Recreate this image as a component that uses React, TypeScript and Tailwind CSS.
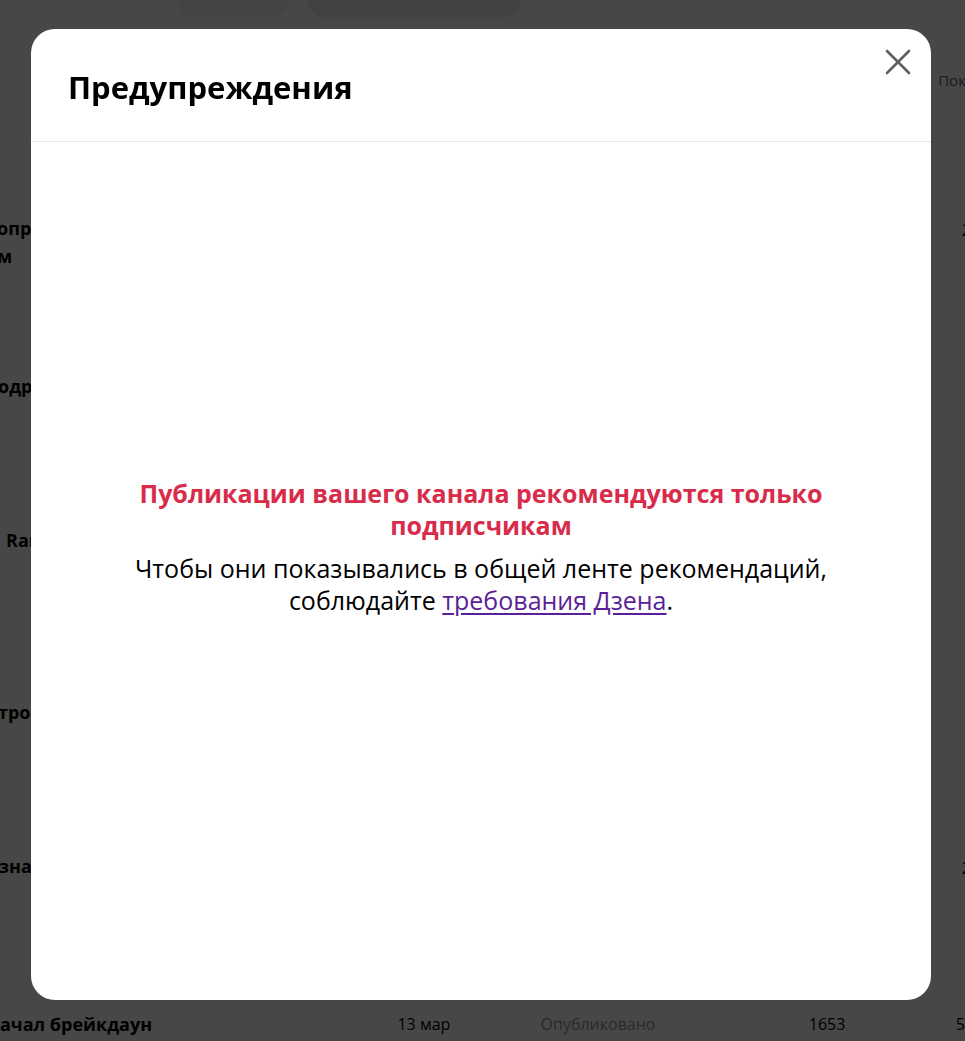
import React from 'react';

const ROWS = [
  { title: ['опросы подписчикам', 'м'], h: 'h-[158px]', right: '2', ml: '-ml-[3px]' },
  { title: ['одробности'], h: 'h-[154px]', right: '', ml: '-ml-[2px]' },
  { title: [' Rammstein'], h: 'h-[172px]', right: '', ml: 'ml-[6px]' },
  { title: ['троили звук'], h: 'h-[154px]', right: '', ml: '-ml-[2px]' },
  { title: ['знаешь'], h: 'h-[159px]', right: '2', ml: '-ml-[1px]' },
];

function Background() {
  return (
    <div className="relative h-[1041px] w-full overflow-hidden bg-white font-['Open_Sans',sans-serif] text-black">
      <div className="flex h-[17px] items-end">
        <div className="ml-[177px] h-[40px] w-[111px] rounded-b-[16px] bg-[#f3f3f3]" />
        <div className="ml-[20px] h-[40px] w-[213px] rounded-b-[16px] bg-[#ececec]" />
      </div>
      <div className="flex justify-end pt-[52px]">
        <span className="-mr-[28px] text-[15px] text-[#666]">Показы</span>
      </div>
      <div className="mt-[122px] flex flex-col">
        {ROWS.map((r, i) => (
          <div key={i} className={`flex ${r.h}`}>
            <div className={`${r.ml} text-[18px] font-bold leading-[28px]`}>
              {r.title.map((t, j) => (
                <div key={j} className="whitespace-nowrap">
                  {t}
                </div>
              ))}
            </div>
            <div className="ml-auto pt-[4px] text-[16px]">{r.right && <span className="mr-[-6px]">{r.right}</span>}</div>
          </div>
        ))}
      </div>
      <div className="flex items-center whitespace-nowrap text-[16px]">
        <span className="w-[400px] text-[18px] font-bold">ачал брейкдаун</span>
        <span className="w-[144px]">13 мар</span>
        <span className="w-[270px] text-[#999]">Опубликовано</span>
        <span className="w-[148px]">1653</span>
        <span>5</span>
      </div>
    </div>
  );
}

export default function App() {
  return (
    <div className="relative h-[1041px] w-full overflow-hidden">
      <Background />
      <div className="fixed inset-0 bg-black/[0.72]">
        <div className="ml-[31px] mt-[29px] flex h-[971px] w-[900px] flex-col rounded-[24px] bg-white font-['Open_Sans',sans-serif]">
          <div className="relative flex h-[113px] shrink-0 items-center border-b border-[#e6e6e6] pl-[37px] pt-[4px]">
            <h2 className="text-[31px] font-bold leading-none text-black">Предупреждения</h2>
            <button className="absolute right-[20px] top-[20px] flex h-[26px] w-[26px] items-center justify-center text-[#5f5f5f]">
              <svg width="26" height="26" viewBox="0 0 26 26" fill="none" stroke="currentColor" strokeWidth="2.6" strokeLinecap="round">
                <path d="M2 2L24 24M24 2L2 24" />
              </svg>
            </button>
          </div>
          <div className="flex flex-1 flex-col items-center justify-center pb-[50px] text-center">
            <p className="max-w-[740px] text-[25px] font-bold leading-[32px] text-[#d82c4a]">
              Публикации вашего канала рекомендуются только подписчикам
            </p>
            <p className="mt-[11px] max-w-[760px] text-[25px] leading-[32px] text-black">
              Чтобы они показывались в общей ленте рекомендаций, соблюдайте{' '}
              <a href="#" className="text-[#5b1f99] underline underline-offset-[3px]">требования Дзена</a>.
            </p>
          </div>
        </div>
      </div>
    </div>
  );
}
